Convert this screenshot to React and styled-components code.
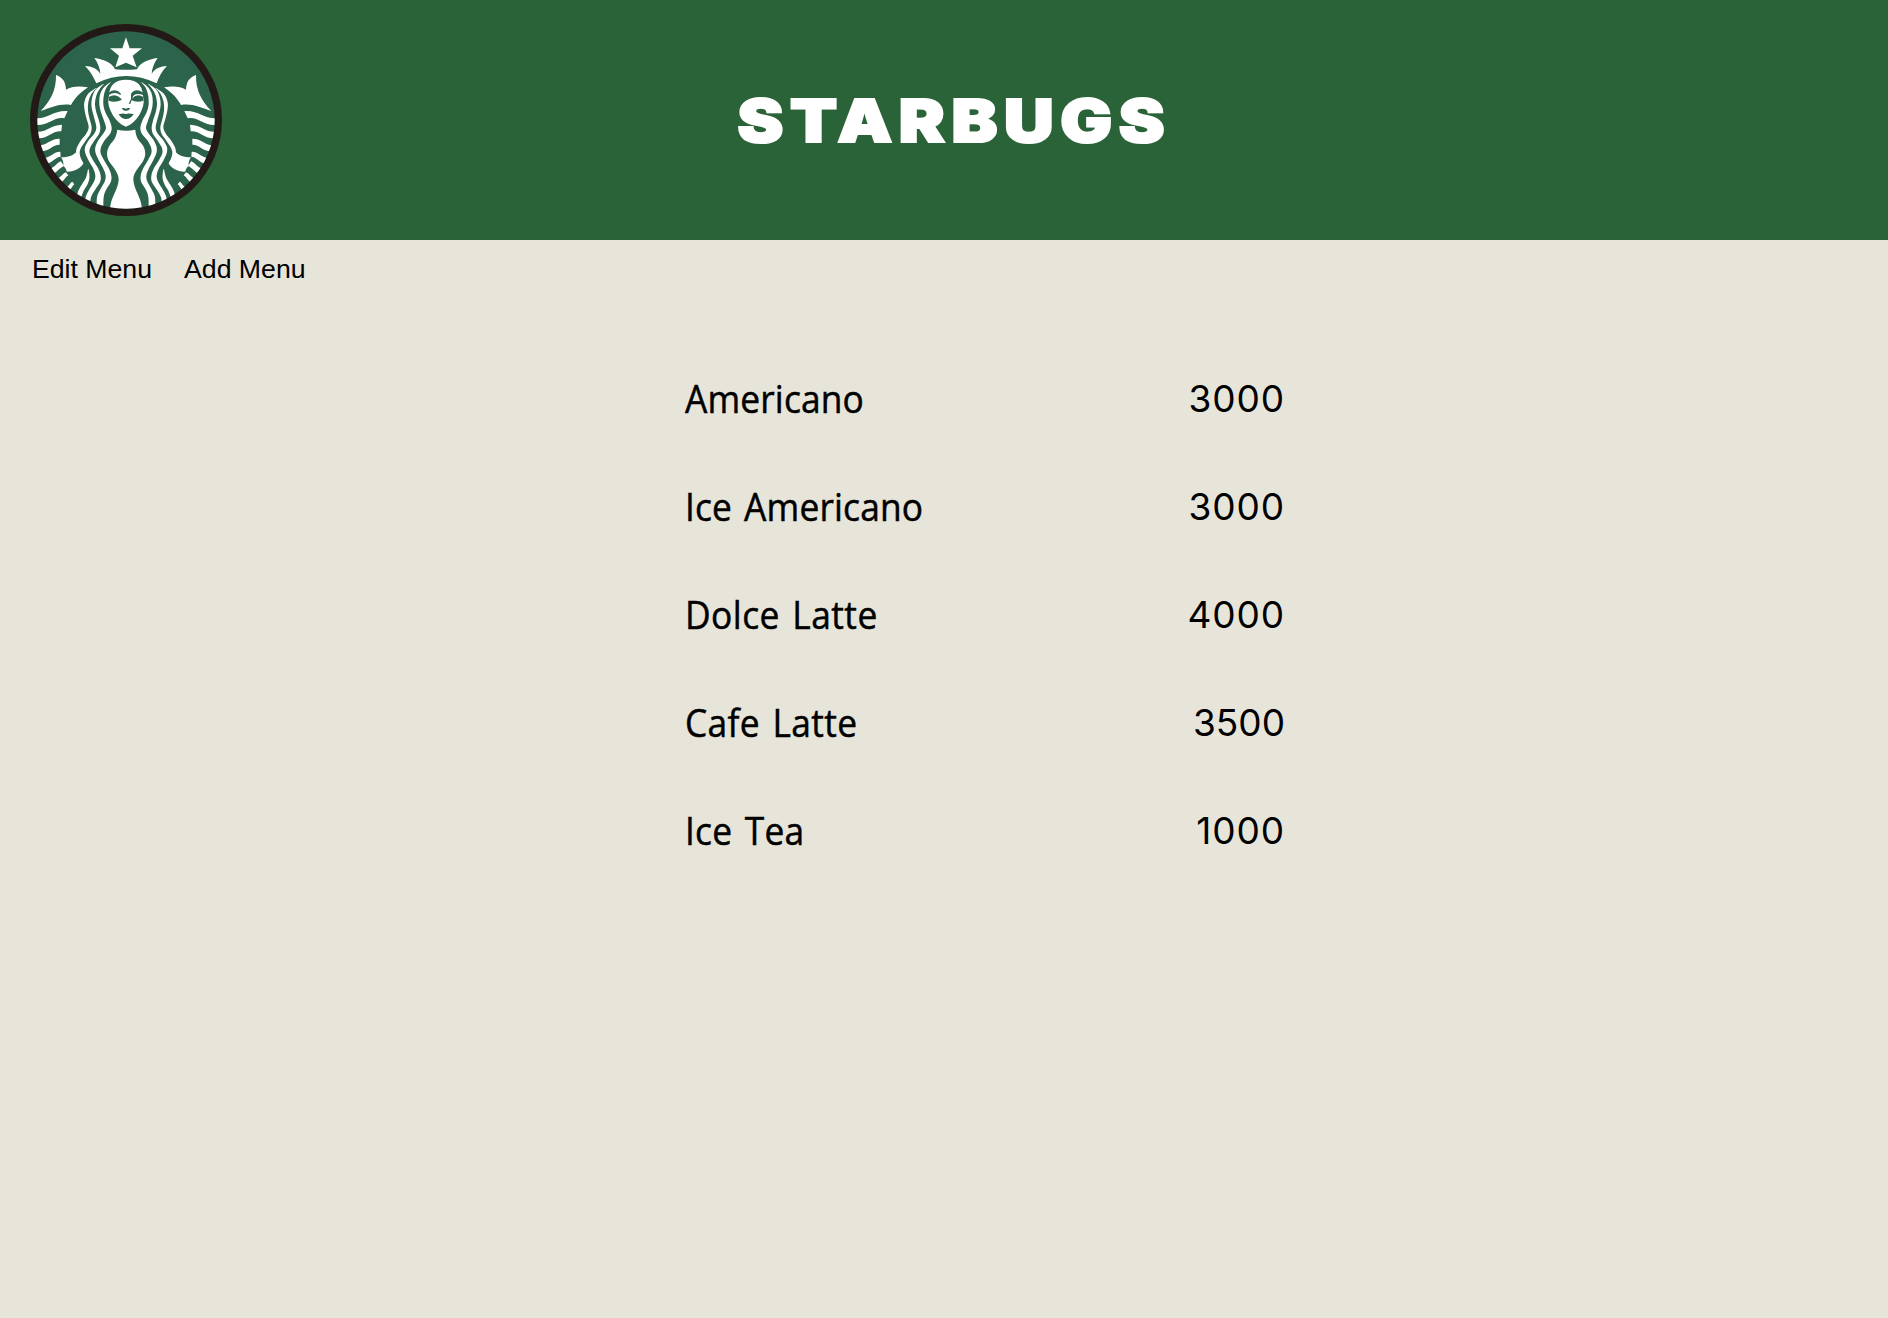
import React from "react";
import styled, { createGlobalStyle } from "styled-components";

const GlobalStyle = createGlobalStyle`
  * { box-sizing: border-box; }
  body {
    margin: 0;
    background: #e7e5da;
    color: #000;
    font-family: "Liberation Sans", Arial, sans-serif;
  }
`;

const Page = styled.div`
  min-height: 1318px;
  background: #e7e5da;
`;

const Header = styled.header`
  display: grid;
  grid-template-columns: 192px 1fr 192px;
  align-items: center;
  height: 240px;
  padding: 0 30px;
  background: #2b6338;
`;

const LogoSvg = styled.svg`
  display: block;
  width: 192px;
  height: 192px;
`;

const Title = styled.h1`
  margin: 0;
  padding-left: 18px;
  color: #fff;
  font-family: Inter, "Liberation Sans", sans-serif;
  font-size: 59.5px;
  font-weight: 900;
  line-height: 80px;
  letter-spacing: 5.8px;
  text-align: center;
  transform: scaleX(1.155);
  -webkit-text-stroke: 2.2px #fff;
`;

const Nav = styled.nav`
  display: flex;
  gap: 32px;
  padding: 14px 32px 0;
  height: 60px;
`;

const NavButton = styled.button`
  height: 30px;
  padding: 0;
  border: 0;
  background: none;
  color: #000;
  font: 26.67px/30px "Liberation Sans", Arial, sans-serif;
  cursor: pointer;
`;

const MenuList = styled.ul`
  display: flex;
  flex-direction: column;
  align-items: center;
  margin: 0;
  padding: 45px 0 0 80px;
  list-style: none;
`;

const MenuItem = styled.li`
  display: flex;
  justify-content: space-between;
  align-items: center;
  width: 600px;
  height: 108px;
  line-height: 54px;
`;

const Name = styled.span`
  padding: 0 0 3px 1px;
  font-family: "Open Sans", "Noto Sans", sans-serif;
  font-size: 38px;
  transform: scaleX(0.93);
  transform-origin: left;
  letter-spacing: ${(p) => p.$tracking}px;
  word-spacing: 3px;
  -webkit-text-stroke: 0.5px #000;
`;

const Price = styled.span`
  margin-right: -1px;
  font-family: Inter, sans-serif;
  font-size: 37px;
  letter-spacing: ${(p) => p.$tracking}px;
`;

const menu = [
  { name: "Americano", price: 3000, tracking: 0.15, priceTracking: 0.9 },
  { name: "Ice Americano", price: 3000, tracking: 0.15, priceTracking: 0.9 },
  { name: "Dolce Latte", price: 4000, tracking: 0.5, priceTracking: 0.9 },
  { name: "Cafe Latte", price: 3500, tracking: 0.4, priceTracking: 0 },
  { name: "Ice Tea", price: 1000, tracking: 0.3, priceTracking: 0.9 },
];

// Smooth curve through the points, as cubic segments.
function curve(points) {
  let d = "";
  for (let i = 0; i < points.length - 1; i += 1) {
    const a = points[i - 1] || points[i];
    const b = points[i];
    const c = points[i + 1];
    const e = points[i + 2] || c;
    d += `C${b[0] + (c[0] - a[0]) / 6},${b[1] + (c[1] - a[1]) / 6} ${c[0] - (e[0] - b[0]) / 6},${c[1] - (e[1] - b[1]) / 6} ${c[0]},${c[1]}`;
  }
  return d;
}

// A lock of hair from rows of [y, left, right].
function lock(rows) {
  const left = rows.map(([y, l]) => [l, y]);
  const right = rows.map(([y, , r]) => [r, y]).reverse();
  return `M${left[0]}${curve(left)}L${right[0]}${curve(right)}Z`;
}

const locks = [
  [[222, 228, 230], [240, 204, 214], [265, 193, 205], [290, 194, 204], [315, 200, 209], [340, 206, 215], [360, 198, 211], [380, 182, 197], [400, 171, 184], [416, 168, 179], [434, 170, 183], [448, 180, 190]],
  [[210, 250, 252], [225, 229, 239], [245, 218, 229], [270, 214, 225], [295, 218, 229], [320, 225, 237], [342, 229, 241], [360, 222, 237], [380, 205, 223], [400, 195, 211], [418, 196, 209], [440, 206, 220], [462, 219, 234], [485, 226, 242], [505, 221, 240], [528, 207, 225], [550, 197, 213], [575, 196, 210]],
  [[205, 271, 273], [220, 252, 260], [242, 240, 252], [270, 238, 250], [295, 243, 256], [320, 252, 269], [342, 258, 275], [360, 249, 270], [380, 234, 253], [400, 226, 243], [418, 227, 242], [440, 237, 253], [462, 249, 266], [485, 257, 274], [505, 253, 272], [528, 240, 258], [550, 231, 251], [590, 230, 250]],
  [[466, 204, 206], [480, 201, 208], [495, 196, 208], [512, 185, 202], [530, 175, 191], [548, 170, 184]],
];

const fins = [
  "M48,313C85,314 100,288 143,291L133,313C102,307 88,335 48,333Z",
  "M48,353C86,354 90,333 126,332L124,352C96,350 86,374 54,373Z",
  "M60,394C88,389 92,374 119,374L119,392C99,391 91,409 66,412Z",
  "M74,432C98,426 102,412 121,413L122,428C108,429 102,441 84,448Z",
  "M94,463C108,456 112,445 123,442L132,457C122,459 117,469 104,477Z",
  "M116,492C127,485 128,479 138,475L145,484C137,489 136,495 126,503Z",
  "M140,519C149,515 150,506 157,503L163,511C157,515 157,521 150,527Z",
];

function LogoSide() {
  return (
    <g>
      <path d="M108,183C130,191 137,205 138,227C155,216 180,216 204,220C181,235 165,252 153,273C122,267 92,281 62,291C91,260 109,230 108,183Z" />
      {fins.map((d) => <path key={d} d={d} />)}
      {locks.map((rows) => <path key={rows[0].join()} d={lock(rows)} />)}
      <path d="M123,430C145,430 159,424 170,413L190,448C184,463 160,474 141,473Q139,462 130,455Q132,442 123,430Z" />
    </g>
  );
}

function Logo() {
  return (
    <LogoSvg viewBox="30 30 576 576" role="img" aria-label="Starbugs">
      <defs>
        <clipPath id="medallion"><circle cx="318" cy="318" r="266" /></clipPath>
      </defs>
      <circle cx="318" cy="318" r="288" fill="#231916" />
      <circle cx="318" cy="318" r="266" fill="#2b634b" />
      <g clipPath="url(#medallion)" fill="#fff">
        <LogoSide />
        <g transform="translate(636 0) scale(-1 1)"><LogoSide /></g>
        <path d="M318,70L329,103L366,103L338,125L350,160L318,146L286,160L297,125L270,103L307,103Z" />
        <path d="M195,156C215,157 232,163 241,180C240,162 233,146 223,132C252,136 277,146 285,166Q318,169 351,166C359,146 384,136 413,132C403,146 396,162 395,180C404,163 421,157 441,156C426,170 417,188 410,208Q318,164 229,208C219,186 210,170 195,156Z" />
        <path d="M318,197C286,197 268,212 267,246C262,265 267,280 274,295C284,317 302,333 318,338C334,333 352,317 362,295C369,280 374,265 369,246C368,212 350,197 318,197Z" />
        <path d="M292,347Q318,353 346,347C347,366 354,377 365,389C379,407 379,426 367,445C348,470 340,481 340,497C342,530 366,550 366,590H270C270,550 294,530 296,497C296,481 286,467 269,445C257,426 259,407 272,389C284,377 289,366 292,347Z" />
        <g fill="#2b634b">
          <path d="M266,236Q286,220 303,239L301,243Q286,231 266,243Z" />
          <path d="M266,249Q286,237 301,252L306,257Q286,267 266,260Z" />
          <path d="M370,236Q345,220 333,240L333,255L326,270L331,269L338,251Q341,235 370,243Z" />
          <path d="M370,249Q351,237 338,252L332,257Q351,267 370,260Z" />
          <path d="M305,283Q312,281 318,284Q324,281 331,283Q326,292 318,290Q310,292 305,283Z" />
          <path d="M296,301Q309,297 318,300Q327,297 341,301Q332,315 318,315Q304,315 296,301Z" />
        </g>
      </g>
    </LogoSvg>
  );
}

export default function App() {
  return (
    <>
      <GlobalStyle />
      <Page>
        <Header>
          <Logo />
          <Title>STARBUGS</Title>
        </Header>
        <Nav>
          <NavButton>Edit Menu</NavButton>
          <NavButton>Add Menu</NavButton>
        </Nav>
        <MenuList>
          {menu.map((item) => (
            <MenuItem key={item.name}>
              <Name $tracking={item.tracking}>{item.name}</Name>
              <Price $tracking={item.priceTracking}>{item.price}</Price>
            </MenuItem>
          ))}
        </MenuList>
      </Page>
    </>
  );
}
